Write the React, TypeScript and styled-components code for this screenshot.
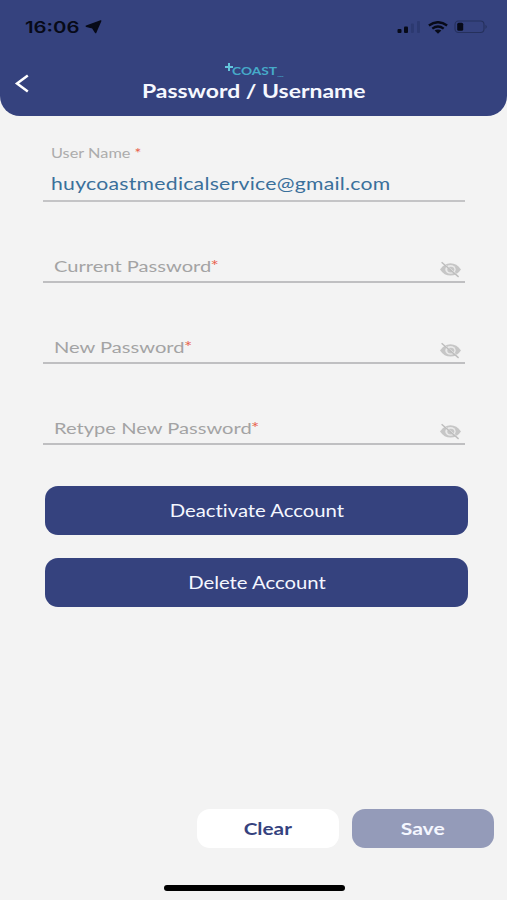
import React from "react";
import styled, { createGlobalStyle } from "styled-components";

const GlobalStyle = createGlobalStyle`
  * { box-sizing: border-box; }
  body { margin: 0; background: #f3f3f3; }
  button { border: 0; padding: 0; background: none; font: inherit; }
`;

const Screen = styled.div`
  width: 507px;
  height: 900px;
  display: flex;
  flex-direction: column;
  overflow: hidden;
  background: #f3f3f3;
  font-family: Lato, "Open Sans", sans-serif;
  font-variant-ligatures: none;
`;

const Wide = styled.span<{ $x: number; $origin?: string }>`
  display: inline-block;
  white-space: nowrap;
  transform: scaleX(${(p) => p.$x});
  transform-origin: ${(p) => p.$origin ?? "left"} center;
`;

const Header = styled.header`
  height: 116px;
  flex: none;
  background: #35427e;
  border-radius: 0 0 20px 20px;
`;

const StatusBar = styled.div`
  height: 54px;
  padding: 0 19px 0 25px;
  display: flex;
  justify-content: space-between;
  align-items: center;
  color: #070a18;
`;

const Clock = styled.div`
  width: 77px;
  height: 20px;
  display: flex;
  align-items: center;
  justify-content: space-between;
  font: 600 16px/20px Inter, sans-serif;
`;

const ClockText = styled.div`
  width: 55px;
`;

const Indicators = styled.div`
  display: flex;
  align-items: center;
`;

const NavBar = styled.div`
  height: 62px;
  display: grid;
  grid-template-columns: 44px 1fr 44px;
`;

const BackButton = styled.button`
  height: 22px;
  margin: 19px 0 0 14px;
  display: flex;
`;

const TitleBlock = styled.div`
  display: flex;
  flex-direction: column;
  align-items: center;
  padding-top: 9px;
`;

const Brand = styled.div`
  width: 58px;
  height: 16px;
  display: flex;
  align-items: flex-start;
  color: #46aac9;
  font-size: 11px;
  font-weight: 700;
  line-height: 16px;
`;

const BrandWord = styled.div`
  width: 46px;
  margin-left: -1px;
`;

const BrandTag = styled.div`
  width: 4px;
  padding-top: 11px;
  font-size: 2.5px;
  line-height: 6px;
`;

const Title = styled.h1`
  margin: 0;
  color: #f6f8ff;
  font-size: 18px;
  line-height: 24px;
  font-weight: 700;
`;

const Form = styled.main`
  padding: 0 42px 0 43px;
  display: flex;
  flex-direction: column;
`;

const UserField = styled.div`
  height: 86px;
  padding: 27px 8px 0;
  border-bottom: 2px solid #c4c4c6;
`;

const Label = styled.div`
  color: #acacac;
  font-size: 13px;
  line-height: 20px;
`;

const Value = styled.div`
  margin-top: 9px;
  color: #3a709b;
  font-size: 16.5px;
  line-height: 24px;
  letter-spacing: 0.2px;
`;

const Field = styled.div`
  height: 81px;
  padding: 0 3px 3px 11px;
  display: flex;
  align-items: flex-end;
  justify-content: space-between;
  border-bottom: 2px solid #bfbfc1;
  color: #a3a3a4;
  font-size: 15.5px;
  line-height: 24px;
`;

const Required = styled.span`
  color: #e8604c;
`;

const FieldRequired = styled(Required)`
  margin-left: -0.5px;
  font-size: 15px;
  line-height: 1;
  vertical-align: 1px;
`;

const Actions = styled.div`
  margin: 41px -3px 0 2px;
  display: flex;
  flex-direction: column;
  gap: 23px;
`;

const Button = styled.button<{ $tone: "primary" | "plain" | "muted" }>`
  display: flex;
  align-items: center;
  justify-content: center;
  height: ${(p) => (p.$tone === "primary" ? 49 : 39)}px;
  width: ${(p) => (p.$tone === "primary" ? "100%" : "142px")};
  padding-top: ${(p) => (p.$tone === "primary" ? 2 : 0)}px;
  border-radius: 13px;
  font-size: ${(p) => (p.$tone === "primary" ? 16.5 : 17)}px;
  font-weight: ${(p) => (p.$tone === "primary" ? 400 : 700)};
  line-height: 21px;
  color: ${(p) => (p.$tone === "plain" ? "#35427e" : "#f4f7ff")};
  background: ${(p) => ({ primary: "#35427e", plain: "#fff", muted: "#949bb9" })[p.$tone]};
`;

const Footer = styled.footer`
  margin-top: auto;
  height: 92px;
  padding: 1px 13px 9px 0;
  display: flex;
  flex-direction: column;
  justify-content: space-between;
`;

const FooterButtons = styled.div`
  display: flex;
  justify-content: flex-end;
  gap: 13px;
`;

const HomeIndicator = styled.div`
  width: 181px;
  height: 6px;
  margin-left: 164px;
  border-radius: 3px;
  background: #000;
`;

const LocationArrow = () => (
  <svg width="17" height="14" viewBox="0 0 17 14">
    <path
      d="M15.7 1 1.3 6.2 7.6 7.9 10.6 12.6Z"
      fill="currentColor"
      stroke="currentColor"
      strokeWidth="1.4"
      strokeLinejoin="round"
    />
  </svg>
);

const Signal = () => (
  <svg width="24" height="14" viewBox="0 0 24 14">
    <rect x="0.5" y="9" width="4" height="4" rx="1" fill="currentColor" />
    <rect x="7" y="6.5" width="4" height="6.5" rx="1" fill="currentColor" />
    <rect x="13.9" y="3.5" width="3" height="9.5" rx="1" fill="#2c3970" />
    <rect x="20" y="1" width="3" height="12" rx="1" fill="#2c3970" />
  </svg>
);

const WifiSvg = styled.svg`
  margin: 0 6px 0 7px;
`;

const Wifi = () => (
  <WifiSvg width="20" height="13" viewBox="0 0 20 13" fill="none" stroke="currentColor" strokeWidth="2.4">
    <path d="M.9 4.4Q10-2 19.1 4.4M4.3 7.6q5.7-4.1 11.4 0" />
    <path d="M6.6 9.5q3.4-2.1 6.8 0L10 12.8Z" fill="currentColor" stroke="none" />
  </WifiSvg>
);

const Battery = () => (
  <svg width="34" height="14" viewBox="0 0 34 14">
    <rect x="1" y="1" width="29" height="11.5" rx="3.5" fill="none" stroke="#25305c" strokeWidth="1.1" />
    <rect x="3.2" y="2.8" width="6" height="8" rx="1.5" fill="currentColor" />
    <path d="M31.5 4.7q2.5 2 0 4.2Z" fill="#25305c" />
  </svg>
);

const EyeOff = () => (
  <svg width="23" height="17" viewBox="0 0 23 17">
    <path d="M1 8.4Q5.3 2.2 11.5 2.2T22 8.4q-4.3 6.2-10.5 6.2T1 8.4Z" fill="#c6c6c6" />
    <ellipse cx="11.5" cy="8.4" rx="5.2" ry="4.3" fill="#e9e9e9" />
    <ellipse cx="11.8" cy="8.6" rx="3.5" ry="2.9" fill="#c6c6c6" />
    <path d="m3.6 1.6 16.6 14" stroke="#f3f3f3" strokeWidth="1.2" />
    <path d="m2.6 1.3 17 14.6" stroke="#bdbdbd" strokeWidth="1.4" />
  </svg>
);

const passwordFields = ["Current Password", "New Password", "Retype New Password"];
const accountActions = ["Deactivate Account", "Delete Account"];

export default function App() {
  return (
    <Screen>
      <GlobalStyle />
      <Header>
        <StatusBar>
          <Clock>
            <ClockText>
              <Wide $x={1.27}>16:06</Wide>
            </ClockText>
            <LocationArrow />
          </Clock>
          <Indicators>
            <Signal />
            <Wifi />
            <Battery />
          </Indicators>
        </StatusBar>
        <NavBar>
          <BackButton aria-label="Back">
            <svg width="16" height="21" viewBox="0 0 16 21">
              <path d="M13.8 2.5 3 10.5l10.8 8" fill="none" stroke="#fff" strokeWidth="2.5" />
            </svg>
          </BackButton>
          <TitleBlock>
            <Brand>
              <svg width="8" height="8" viewBox="0 0 8 8">
                <path d="M4 0v8M0 4h8" stroke="#63c5dc" strokeWidth="2" />
              </svg>
              <BrandWord>
                <Wide $x={1.25}>COAST</Wide>
              </BrandWord>
              <BrandTag>
                <Wide $x={1.1} $origin="right">MED</Wide>
              </BrandTag>
            </Brand>
            <Title>
              <Wide $x={1.274} $origin="center">Password / Username</Wide>
            </Title>
          </TitleBlock>
        </NavBar>
      </Header>
      <Form>
        <UserField>
          <Label>
            <Wide $x={1.255}>
              User Name <Required>*</Required>
            </Wide>
          </Label>
          <Value>
            <Wide $x={1.285}>huycoastmedicalservice@gmail.com</Wide>
          </Value>
        </UserField>
        {passwordFields.map((label) => (
          <Field key={label}>
            <Wide $x={1.298}>
              {label}
              <FieldRequired>*</FieldRequired>
            </Wide>
            <EyeOff />
          </Field>
        ))}
        <Actions>
          {accountActions.map((label) => (
            <Button key={label} $tone="primary">
              <Wide $x={1.23} $origin="center">{label}</Wide>
            </Button>
          ))}
        </Actions>
      </Form>
      <Footer>
        <FooterButtons>
          <Button $tone="plain">
            <Wide $x={1.22} $origin="center">Clear</Wide>
          </Button>
          <Button $tone="muted">
            <Wide $x={1.24} $origin="center">Save</Wide>
          </Button>
        </FooterButtons>
        <HomeIndicator />
      </Footer>
    </Screen>
  );
}
